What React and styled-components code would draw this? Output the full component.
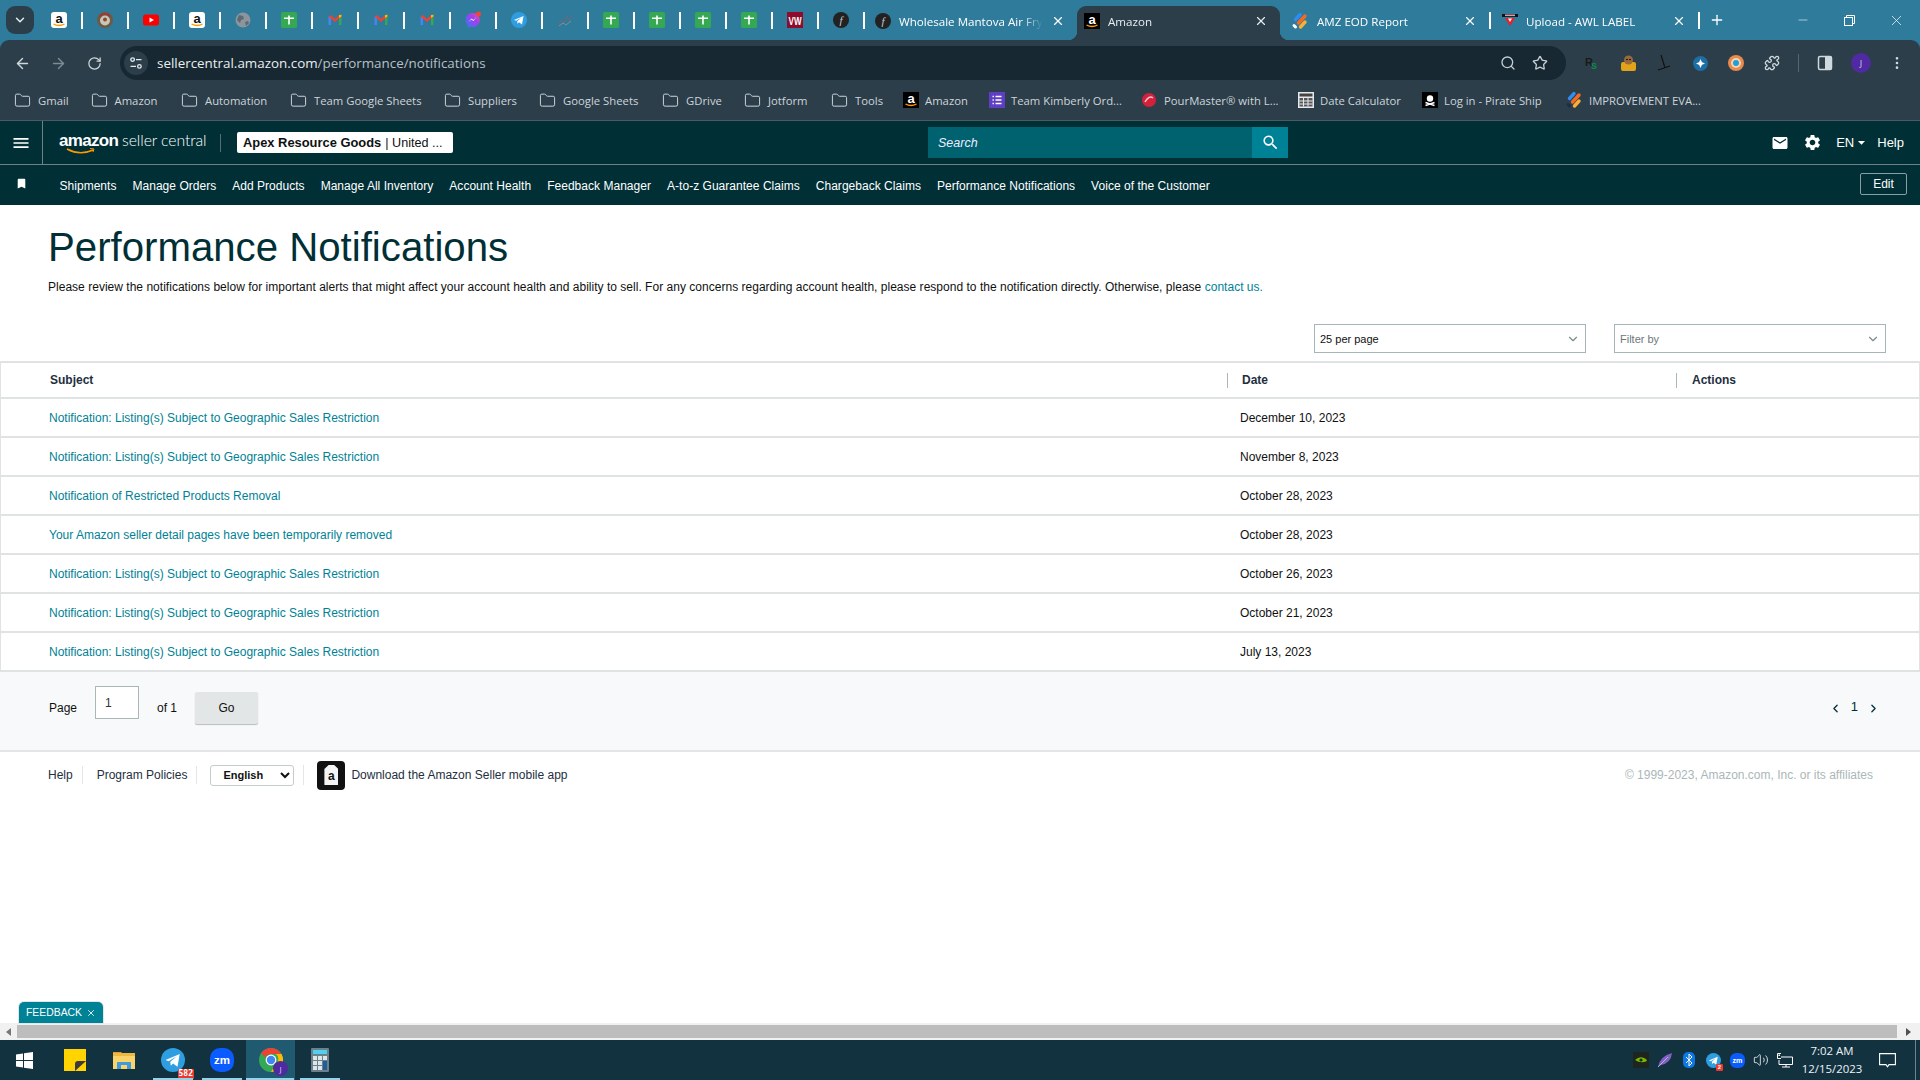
import React from "react";
import styled, { createGlobalStyle } from "styled-components";
import { ArrowLeft, ArrowRight, RotateCw, Search, Star, Puzzle, X, Plus, Minus, Folder, ChevronDown, ChevronLeft, ChevronRight, Volume2, MoreVertical } from "lucide-react";
import { MdMenu, MdEmail, MdSettings, MdBookmark, MdSearch, MdArrowDropDown } from "react-icons/md";

const Global = createGlobalStyle`
  html, body { margin: 0; padding: 0; height: 100%; overflow: hidden; background: #fff; }
  #root { height: 100vh; }
  * { box-sizing: border-box; }
`;
const UI = `"Open Sans", "Noto Sans", sans-serif`;
const AR = `"Liberation Sans", Arial, sans-serif`;

const Page = styled.div`display:flex;flex-direction:column;height:100vh;font-family:${AR};color:#0f1111;`;
const BrowserChrome = styled.div`background:#2e7b9b;flex:none;`;
const TabStrip = styled.div`display:flex;align-items:flex-end;height:40px;padding-left:6px;color:#fff;font-family:${UI};`;
const TabMenu = styled.div`width:28px;height:28px;border-radius:9px;background:#2c3e4a;display:flex;align-items:center;justify-content:center;margin:0 3px 6px 0;color:#e6edf0;`;
const Pinned = styled.div`width:44px;height:34px;display:flex;align-items:center;justify-content:center;padding-bottom:6px;`;
const Sep = styled.div`width:2px;height:17px;background:#fff;margin-bottom:11px;flex:none;`;
const Tab = styled.div`
  position:relative;flex:none;width:${p=>p.$w}px;height:34px;display:flex;align-items:center;gap:8px;
  padding:0 12px 4px ${p=>p.$pl}px;font-size:11.6px;color:${p=>p.$active?"#e8eef1":"#fff"};
  background:${p=>p.$active?"#2c3e4a":"transparent"};border-radius:${p=>p.$active?"9px 9px 0 0":"0"};
  ${p=>p.$active?`
    &::before,&::after{content:"";position:absolute;bottom:0;width:9px;height:9px;}
    &::before{left:-9px;background:radial-gradient(circle at 0 0,transparent 9px,#2c3e4a 9.5px);}
    &::after{right:-9px;background:radial-gradient(circle at 100% 0,transparent 9px,#2c3e4a 9.5px);}
  `:""}
`;
const TabTitle = styled.span`flex:1;min-width:0;white-space:nowrap;overflow:hidden;-webkit-mask-image:linear-gradient(90deg,#000 85%,transparent);mask-image:linear-gradient(90deg,#000 85%,transparent);`;
const NewTab = styled.div`width:34px;height:34px;display:flex;align-items:center;justify-content:center;padding-bottom:6px;`;
const WinControls = styled.div`margin-left:auto;display:flex;align-self:stretch;align-items:center;padding-right:0;`;
const WinBtn = styled.div`width:47px;height:40px;display:flex;align-items:center;justify-content:center;color:#fff;`;

const Toolbar = styled.div`height:40px;background:#2c3e4a;border-radius:9px 9px 0 0;display:flex;align-items:flex-end;padding-left:4px;color:#cfd8dc;`;
const NavBtn = styled.div`width:36px;height:34px;display:flex;align-items:center;justify-content:center;color:${p=>p.$dim?"#7d8b94":"#cfd8dc"};`;
const Omni = styled.div`margin-left:8px;width:1446px;height:34px;border-radius:17px;background:#172832;display:flex;align-items:center;padding-left:4px;padding-right:10px;`;
const SiteBtn = styled.div`width:24px;height:24px;border-radius:50%;background:#2c3e4a;display:flex;align-items:center;justify-content:center;flex:none;`;
const Url = styled.span`margin-left:9px;font:13.4px ${UI};color:#e9eef1;flex:1;white-space:nowrap;`;
const UrlDim = styled.span`color:#b6c0c6;`;
const OmniIcon = styled.div`width:32px;display:flex;justify-content:center;color:#c4ced3;`;
const Ext = styled.div`width:36px;height:34px;display:flex;align-items:center;justify-content:center;flex:none;`;
const ToolSep = styled.div`width:1px;height:18px;background:#55666f;margin:0 9px 8px 8px;align-self:flex-end;`;
const Avatar = styled.div`width:${p=>p.$s||20}px;height:${p=>p.$s||20}px;border-radius:50%;background:#4f2aa0;color:#d9cff5;font:${p=>p.$fs||9}px ${UI};display:flex;align-items:center;justify-content:center;`;

const Bookmarks = styled.div`height:41px;background:#2c3e4a;border-bottom:1px solid #4b5a63;display:flex;align-items:center;font:11.3px ${UI};color:#ccd5da;padding-left:${p=>p.$pl}px;`;
const Bookmark = styled.div`flex:none;width:${p=>p.$w}px;display:flex;align-items:center;gap:${p=>p.$gap||7}px;white-space:nowrap;`;

const SellerHeader = styled.div`height:44px;background:#002f36;border-bottom:1px solid #6e8286;display:flex;align-items:center;color:#fff;flex:none;`;
const BurgerCell = styled.div`width:43px;height:100%;border-right:1px solid #6e8286;display:flex;align-items:center;justify-content:center;padding-right:1px;`;
const Logo = styled.div`position:relative;margin-left:16px;width:144px;display:flex;align-items:baseline;gap:4px;height:22px;padding-bottom:4px;margin-top:-3px;white-space:nowrap;`;
const LogoMark = styled.span`font:bold 17px ${AR};letter-spacing:-0.7px;`;
const LogoName = styled.span`font:300 15.8px Lato,${UI};letter-spacing:-0.1px;`;
const LogoSmile = styled.svg`position:absolute;left:7px;top:18px;`;
const HeaderSep = styled.div`width:1px;height:18px;background:#566f74;margin-left:17px;`;
const Account = styled.div`margin-left:16px;width:216px;height:21px;background:#fff;border-radius:2px;color:#0f1111;display:flex;align-items:center;padding-left:6px;font:12.6px ${AR};white-space:nowrap;`;
const AccountName = styled.b`font:bold 12.9px ${AR};margin-right:4px;`;
const SearchBox = styled.div`margin-left:475px;width:324px;height:31px;background:#00616f;font:italic 12.5px ${AR};color:#eef;display:flex;align-items:center;padding-left:10px;`;
const SearchBtn = styled.div`width:36px;height:31px;background:#008296;display:flex;align-items:center;justify-content:center;`;
const HeaderRight = styled.div`margin-left:auto;display:flex;align-items:center;padding-right:16px;font:13px ${AR};`;
const HeaderIcon = styled.div`width:${p=>p.$w}px;display:flex;justify-content:center;`;
const Lang = styled.div`display:flex;align-items:center;margin-left:7px;margin-right:4px;`;

const SellerNav = styled.div`height:40px;background:#002f36;display:flex;align-items:center;color:#fff;flex:none;font:12px ${AR};padding-top:2px;`;
const NavPin = styled.div`width:59.5px;padding-left:15px;display:flex;margin-top:-6px;`;
const NavLinks = styled.div`display:flex;gap:16px;white-space:nowrap;letter-spacing:.03px;`;
const EditBtn = styled.div`margin-left:auto;margin-right:13px;margin-top:-5px;width:47px;height:22px;border:1px solid #8a9da1;border-radius:2px;display:flex;align-items:center;justify-content:center;font:12px ${AR};`;

const Main = styled.div`position:relative;flex:1;min-height:0;display:flex;flex-direction:column;background:#fff;`;
const Intro = styled.div`padding:20px 48px 0;`;
const Title = styled.h1`margin:0;font:400 40.2px/46px ${AR};color:#002f36;`;
const Desc = styled.p`margin:8px 0 0;font:12px/16px ${AR};color:#0f1111;white-space:nowrap;letter-spacing:.02px;`;
const Link = styled.a`color:#008296;text-decoration:none;`;
const Controls = styled.div`display:flex;justify-content:flex-end;gap:28px;padding:29px 34px 8px 0;`;
const Dropdown = styled.div`width:272px;height:29px;border:1px solid #a6b6b8;display:flex;align-items:center;justify-content:space-between;padding:0 5px 0 5px;font:11px ${AR};color:${p=>p.$muted?"#6c7778":"#0f1111"};`;
const Table = styled.div`border:solid #dfe3e3;border-width:2px 1px 0;flex:none;`;
const Row = styled.div`display:grid;grid-template-columns:1226px 449px 1fr;height:${p=>p.$h}px;border-bottom:2px solid #dfe3e3;align-items:center;font-size:12px;`;
const HeadCell = styled.div`font-weight:bold;color:#232f3e;padding-left:${p=>p.$pl}px;${p=>p.$div?"border-left:1px solid #aab7b8;":""}height:15px;line-height:15px;`;
const Cell = styled.div`padding-left:${p=>p.$pl}px;color:#0f1111;`;
const Pager = styled.div`height:80px;background:#f8f9fa;border-bottom:2px solid #e3e6e6;display:flex;align-items:center;padding:0 0 6px 49px;font-size:12px;flex:none;`;
const PageInput = styled.div`width:44px;height:33px;border:1px solid #aab7b8;background:#fff;margin:0 18px 11px 18px;padding:9px 0 0 9px;font-size:12px;color:#333;`;
const GoBtn = styled.div`width:63px;height:32px;margin-left:18px;background:#e3e6e6;border-radius:2px;box-shadow:0 1px 1px rgba(0,0,0,.25);display:flex;align-items:center;justify-content:center;color:#0f1111;`;
const PagerRight = styled.div`margin-left:auto;margin-right:40px;display:flex;align-items:center;gap:7px;color:#002f36;font-size:13px;`;
const Footer = styled.div`height:46px;display:flex;align-items:center;padding:0 47px 0 48px;font-size:12px;color:#232f3e;flex:none;`;
const FootLink = styled.span`padding-right:${p=>p.$pr}px;margin-right:${p=>p.$mr}px;border-right:1px solid #e3e6e6;line-height:18px;white-space:nowrap;`;
const LangSelect = styled.select`width:84px;height:21px;font:bold 11px ${AR};color:#0f1111;background:#fff;border:1px solid #c4cccc;border-radius:3px;padding-left:8px;`;
const FootDiv = styled.div`width:1px;height:20px;background:#e3e6e6;margin:0 13px 0 9px;`;
const AppTag = styled.div`width:28px;height:29px;border-radius:4px;background:#111;display:flex;align-items:center;justify-content:center;margin-right:6px;`;
const Copy = styled.span`margin-left:auto;color:#aab7b8;`;
const Feedback = styled.div`position:absolute;left:19px;bottom:0;width:84px;height:21px;background:#008296;border-radius:5px 5px 0 0;box-shadow:0 0 0 1px #e3e6e6;color:#fff;font:10.4px ${AR};display:flex;align-items:center;justify-content:center;gap:4px;`;

const HScroll = styled.div`height:17px;background:#f1f1f1;display:flex;align-items:center;flex:none;`;
const ScrollArrow = styled.div`width:17px;display:flex;justify-content:center;`;
const ScrollThumb = styled.div`flex:1;height:13px;background:#bdbdbd;`;
const Tri = styled.div`width:0;height:0;border-style:solid;border-color:transparent;border-width:4px 0;${p=>p.$left?"border-right:5px solid #777;":"border-left:5px solid #505050;"}`;

const Taskbar = styled.div`height:40px;background:#123240;display:flex;align-items:center;color:#fff;flex:none;`;
const StartBtn = styled.div`width:50px;display:flex;justify-content:center;padding-right:2px;`;
const TaskItem = styled.div`
  position:relative;width:49px;height:40px;display:flex;align-items:center;justify-content:center;
  background:${p=>p.$active?"#1f5a70":"transparent"};
  ${p=>p.$open?`&::after{content:"";position:absolute;bottom:0;left:${p.$active?0:5}px;right:${p.$active?1:4}px;height:2px;background:#8fd6ec;}`:""}
`;
const CountBadge = styled.span`position:absolute;right:3px;bottom:1px;background:#e8392f;color:#fff;font:bold 8px/10px "DejaVu Sans Mono",monospace;padding:0 1px;border-radius:1px;`;
const Tray = styled.div`margin-left:auto;display:flex;align-items:center;height:100%;`;
const TrayIcon = styled.div`width:24px;display:flex;justify-content:center;position:relative;`;
const Clock = styled.div`width:70px;text-align:center;font:11.4px/18px ${UI};color:#eef3f5;`;
const Notify = styled.div`width:40px;display:flex;justify-content:center;`;
const ShowDesktop = styled.div`width:13px;height:100%;margin-left:0;border-right:0;display:flex;justify-content:center;`;
const ShowLine = styled.div`width:1px;height:100%;background:#6d838d;margin-left:3px;`;

/* favicons */
const AFav = ({ dark, size = 16 }) => (
  <svg width={size} height={size} viewBox="0 0 16 16">
    <rect width="16" height="16" rx={dark ? 0 : 3} fill={dark ? "#000" : "#fff"} />
    <text x="8" y="10.5" textAnchor="middle" fontFamily="Liberation Sans" fontWeight="bold" fontSize="13" fill={dark ? "#fff" : "#111"}>a</text>
    <path d="M2.5 12q5.5 3 11 0" stroke="#f90" strokeWidth="1.4" fill="none" />
  </svg>
);
const Sheets = () => (
  <svg width="16" height="16" viewBox="0 0 16 16"><rect width="16" height="16" rx="1.5" fill="#34a853" /><path d="M3 6.2h10M8 3.5v9" stroke="#fff" strokeWidth="1.6" /></svg>
);
const Gmail = () => (
  <svg width="16" height="16" viewBox="0 0 16 16">
    <path d="M1.5 13V4.5l2.5 1v7.5z" fill="#4285f4" /><path d="M12 13V5.5l2.5-1V13z" fill="#34a853" />
    <path d="M1.5 4.5L4 3l4 4 4-4 2.5 1.5L8 10z" fill="#ea4335" /><path d="M12 3l2.5-.3v1.8L12 6z" fill="#fbbc04" />
  </svg>
);
const Youtube = () => (
  <svg width="16" height="16" viewBox="0 0 16 16"><rect y="2.5" width="16" height="11" rx="2.5" fill="#f00" /><path d="M6.5 5.5l4.5 2.5-4.5 2.5z" fill="#fff" /></svg>
);
const Seal = () => (
  <svg width="16" height="16" viewBox="0 0 16 16"><circle cx="8" cy="8" r="8" fill="#6d5a45" /><circle cx="8" cy="8.5" r="5" fill="#c9c6b8" /><circle cx="8" cy="7.5" r="2" fill="#8a4a3a" /><path d="M3 4q5-4 10 0" stroke="#a33" strokeWidth="1.5" fill="none" /></svg>
);
const Globe = () => (
  <svg width="16" height="16" viewBox="0 0 16 16"><circle cx="8" cy="8" r="7.5" fill="#8b959b" /><path d="M4 3l4 1 1 3-3 1-1 3-3-3zM10 10l3-1 1 2-3 3z" fill="#5c6a72" /></svg>
);
const Messenger = () => (
  <svg width="18" height="18" viewBox="0 0 18 18"><defs><linearGradient id="ms" x1="0" y1="1" x2="1" y2="0"><stop offset="0" stopColor="#2d7df6" /><stop offset=".6" stopColor="#a23ef0" /><stop offset="1" stopColor="#f5537f" /></linearGradient></defs><path d="M8.5 2a7 7 0 0 0-4.5 12.2V17l2.5-1.4A7 7 0 1 0 8.5 2z" fill="url(#ms)" /><path d="M4.5 11l3-3.5 2 1.6L12.5 6l-3 4-2-1.6z" fill="#fff" /><circle cx="14.5" cy="3" r="2.5" fill="#f0453a" /></svg>
);
const Telegram = ({ size = 16 }) => (
  <svg width={size} height={size} viewBox="0 0 16 16"><circle cx="8" cy="8" r="8" fill="#2f9ee0" /><path d="M3 8l9.5-4-1.5 8.5-3-2.2-1.5 1.5-.3-2.6 4.3-3.7-5.4 3.3z" fill="#fff" /></svg>
);
const Chart = () => (
  <svg width="16" height="16" viewBox="0 0 16 16"><path d="M1 13l3-5 3 3 3-7 2 5 3-6" stroke="#5a6f83" strokeWidth="1.3" fill="none" /><path d="M2 14l4-3 3 2 5-4" stroke="#7b8ea0" strokeWidth="1" fill="none" /></svg>
);
const VW = () => (
  <svg width="16" height="16" viewBox="0 0 16 16"><rect width="16" height="16" fill="#8d0c2c" /><text x="8" y="12.5" textAnchor="middle" fontFamily="Liberation Sans" fontWeight="bold" fontSize="10" textLength="13" lengthAdjust="spacingAndGlyphs" fill="#fff">VW</text></svg>
);
const FCircle = () => (
  <svg width="16" height="16" viewBox="0 0 16 16"><circle cx="8" cy="8" r="8" fill="#222" /><text x="8" y="11.5" textAnchor="middle" fontFamily="Liberation Serif" fontStyle="italic" fontSize="11" fill="#ccc">f</text></svg>
);
const Jot = ({ dark }) => (
  <svg width="18" height="18" viewBox="0 0 18 18">
    <g strokeLinecap="round" fill="none"><path d="M9 2.5L4.5 7.5" stroke="#2f8cf0" strokeWidth="3.4" /><path d="M14 4L7.5 11" stroke="#f26a24" strokeWidth="3.4" /><path d="M14 10l-4.5 5" stroke="#fbb034" strokeWidth="3.4" /><path d="M3 13.5l1.5 1.5" stroke={dark ? "#1b2c55" : "#fff"} strokeWidth="3" /></g>
  </svg>
);
const AwlFav = () => (
  <svg width="16" height="16" viewBox="0 0 16 16"><rect y="1" width="16" height="3" fill="#111" /><rect x="3" y="1.5" width="10" height="1.6" fill="#d9a" /><path d="M3 5h10l-5 8z" fill="#e8202a" /><path d="M6 5.5h4L8 9z" fill="#fff" /></svg>
);
const FolderIcon = () => <Folder size={17} strokeWidth={1.4} color="#ccd5da" style={{ flex: "none" }} />;
const Forms = () => (
  <svg width="16" height="16" viewBox="0 0 16 16"><rect width="16" height="16" fill="#5f3dc4" /><path d="M6.5 4.5h6M6.5 8h6M6.5 11.5h6M3.5 4.5h1.4M3.5 8h1.4M3.5 11.5h1.4" stroke="#fff" strokeWidth="1.6" /></svg>
);
const Pour = () => (
  <svg width="16" height="16" viewBox="0 0 16 16"><circle cx="8" cy="8" r="7" fill="#d3213c" /><path d="M4 10q4-7 8-4" stroke="#f6c0c8" strokeWidth="1.5" fill="none" /></svg>
);
const Calc = () => (
  <svg width="16" height="16" viewBox="0 0 16 16"><rect width="16" height="16" fill="#e6e9ec" /><rect x="1.5" y="1.5" width="13" height="3" fill="#444" /><path d="M1.5 6h13v8.5h-13z" fill="#555" /><path d="M5.5 6v8.5M10 6v8.5M1.5 9h13M1.5 12h13" stroke="#e6e9ec" /></svg>
);
const Pirate = () => (
  <svg width="16" height="16" viewBox="0 0 16 16"><rect width="16" height="16" fill="#000" /><circle cx="8" cy="6.5" r="3.2" fill="#fff" /><path d="M3.5 10.5l9 3M12.5 10.5l-9 3" stroke="#fff" strokeWidth="1.6" /></svg>
);
const TuneIcon = () => (
  <svg width="14" height="14" viewBox="0 0 14 14" fill="none" stroke="#e3e8eb" strokeWidth="1.3"><circle cx="3.6" cy="3.6" r="1.8" /><path d="M7 3.6h5.5M1.5 10.4H7" /><circle cx="10.4" cy="10.4" r="1.8" /></svg>
);
const SidePanel = () => (
  <svg width="16" height="16" viewBox="0 0 16 16"><rect x="1.5" y="1.5" width="13" height="13" rx="1.5" fill="none" stroke="#cfd8dc" strokeWidth="1.5" /><rect x="8" y="1.5" width="6.5" height="13" fill="#cfd8dc" /></svg>
);
const Restore = () => (
  <svg width="11" height="11" viewBox="0 0 11 11" fill="none" stroke="#fff"><rect x=".5" y="2.5" width="8" height="8" /><path d="M2.5 2.5v-2h8v8h-2" /></svg>
);
const Win = () => (
  <svg width="17" height="17" viewBox="0 0 17 17" fill="#fff"><path d="M0 2.4l7-1v6.6H0zM8 1.2L17 0v8H8zM0 9h7v6.6l-7-1zM8 9h9v8l-9-1.2z" /></svg>
);
const Notes = () => (
  <svg width="22" height="22" viewBox="0 0 22 22"><rect width="22" height="22" fill="#ffd400" /><path d="M11 22V15q0-3 3-3h8z" fill="#3b3b3b" /><path d="M11 22l11-10v0" fill="none" /></svg>
);
const Explorer = () => (
  <svg width="22" height="20" viewBox="0 0 22 20"><path d="M0 2h8l2 2h-10z" fill="#e0a02f" /><rect y="3" width="22" height="16" fill="#fbd36b" /><rect y="3" width="22" height="3" fill="#f0b840" /><path d="M4 19v-7h14v7h-4v-4H8v4z" fill="#3f9bdc" /></svg>
);
const Zoom = ({ size = 24 }) => (
  <svg width={size} height={size} viewBox="0 0 24 24"><rect width="24" height="24" rx="10" fill="#0b5cff" /><text x="12" y="16" textAnchor="middle" fontFamily="Liberation Sans" fontWeight="bold" fontSize="11.5" fill="#fff">zm</text></svg>
);
const ChromeLogo = () => (
  <svg width="24" height="24" viewBox="0 0 24 24">
    <circle cx="12" cy="12" r="12" fill="#34a853" /><path d="M12 0a12 12 0 0 1 10.4 6H12a6 6 0 0 0-5.6 3.6L2.2 5A12 12 0 0 1 12 0z" fill="#ea4335" />
    <path d="M22.4 6A12 12 0 0 1 12 24l5-8.5A6 6 0 0 0 17 6z" fill="#fbbc04" /><circle cx="12" cy="12" r="5.4" fill="#fff" /><circle cx="12" cy="12" r="4.2" fill="#4285f4" />
  </svg>
);
const CalcApp = () => (
  <svg width="18" height="24" viewBox="0 0 18 24"><rect width="18" height="24" rx="1" fill="#6e7f8c" /><rect x="2" y="2" width="14" height="4" fill="#4fd0ee" /><path d="M2 8h4v4H2zM7 8h4v4H7zM12 8h4v4h-4zM2 13h4v4H2zM7 13h4v4H7zM2 18h4v4H2zM7 18h4v4H7z" fill="#dfe6ea" /><rect x="12" y="13" width="4" height="9" fill="#1e5f96" /></svg>
);
const Nvidia = () => (
  <svg width="16" height="16" viewBox="0 0 16 16"><rect width="16" height="16" fill="#1e241e" /><path d="M2 8q5-5 11-1l1 2q-6 3-12-1z" fill="#76b900" /><circle cx="8" cy="8" r="1.6" fill="#1e241e" /></svg>
);
const Feather = () => (
  <svg width="16" height="16" viewBox="0 0 16 16"><path d="M1 15Q3 4 15 1 14 11 4 13z" fill="#8063c0" /><path d="M1 15L11 5" stroke="#cdbcf0" strokeWidth=".8" /></svg>
);
const Bluetooth = () => (
  <svg width="12" height="16" viewBox="0 0 12 16"><rect width="12" height="16" rx="5" fill="#0b78e3" /><path d="M3 5l6 6-3 3V2l3 3-6 6" stroke="#fff" fill="none" /></svg>
);
const NetIcon = () => (
  <svg width="16" height="15" viewBox="0 0 16 15" fill="none" stroke="#fff"><path d="M4 .5H.5v5H4M4 4h11.5v7.5H2V7" /><path d="M9 11.5v2.5M5 14h8" /><rect x="1.5" y="1.5" width="1.5" height="1.5" fill="#fff" stroke="none" /></svg>
);
const NotifyIcon = () => (
  <svg width="17" height="15" viewBox="0 0 17 15" fill="none" stroke="#fff" strokeWidth="1.1"><path d="M.6.6h15.8v11H10l-1.5 2.2L7 11.6H.6z" /></svg>
);

const pinned = [<AFav />, <Seal />, <Youtube />, <AFav />, <Globe />, <Sheets />, <Gmail />, <Gmail />, <Gmail />, <Messenger />, <Telegram />, <Chart />, <Sheets />, <Sheets />, <Sheets />, <Sheets />, <VW />, <FCircle />];
const bookmarks = [
  { w: 76.5, t: "Gmail" }, { w: 90.5, t: "Amazon" }, { w: 109, t: "Automation" }, { w: 154, t: "Team Google Sheets" }, { w: 95, t: "Suppliers" },
  { w: 123, t: "Google Sheets" }, { w: 82, t: "GDrive" }, { w: 87, t: "Jotform" }, { w: 72, t: "Tools" },
  { w: 86, t: "Amazon", i: <AFav dark />, gap: 6 }, { w: 152, t: "Team Kimberly Ord...", i: <Forms />, gap: 6 }, { w: 157, t: "PourMaster® with L...", i: <Pour />, gap: 7 },
  { w: 124, t: "Date Calculator", i: <Calc />, gap: 6 }, { w: 143, t: "Log in - Pirate Ship", i: <Pirate />, gap: 6 }, { w: 140, t: "IMPROVEMENT EVA...", i: <Jot dark />, gap: 6 },
];
const navLinks = ["Shipments", "Manage Orders", "Add Products", "Manage All Inventory", "Account Health", "Feedback Manager", "A-to-z Guarantee Claims", "Chargeback Claims", "Performance Notifications", "Voice of the Customer"];
const GEO = "Notification: Listing(s) Subject to Geographic Sales Restriction";
const rows = [
  [GEO, "December 10, 2023"], [GEO, "November 8, 2023"], ["Notification of Restricted Products Removal", "October 28, 2023"],
  ["Your Amazon seller detail pages have been temporarily removed", "October 28, 2023"], [GEO, "October 26, 2023"], [GEO, "October 21, 2023"], [GEO, "July 13, 2023"],
];

export default function App() {
  return (
    <Page>
      <Global />
      <BrowserChrome>
        <TabStrip>
          <TabMenu><ChevronDown size={14} strokeWidth={2.5} /></TabMenu>
          {pinned.map((icon, i) => (
            <React.Fragment key={i}><Pinned>{icon}</Pinned><Sep /></React.Fragment>
          ))}
          <Tab $w={212} $pl={10}><FCircle /><TabTitle>Wholesale Mantova Air Fryer</TabTitle><X size={14} /></Tab>
          <Tab $w={203} $pl={7} $active><AFav dark /><TabTitle>Amazon</TabTitle><X size={14} /></Tab>
          <Tab $w={209} $pl={11}><Jot /><TabTitle>AMZ EOD Report</TabTitle><X size={14} /></Tab>
          <Sep />
          <Tab $w={207} $pl={11}><AwlFav /><TabTitle>Upload - AWL LABEL</TabTitle><X size={14} /></Tab>
          <Sep />
          <NewTab><Plus size={16} /></NewTab>
          <WinControls>
            <WinBtn><Minus size={14} strokeWidth={1} /></WinBtn>
            <WinBtn><Restore /></WinBtn>
            <WinBtn><X size={17} strokeWidth={1} /></WinBtn>
          </WinControls>
        </TabStrip>
        <Toolbar>
          <NavBtn><ArrowLeft size={17} /></NavBtn>
          <NavBtn $dim><ArrowRight size={17} /></NavBtn>
          <NavBtn><RotateCw size={15} /></NavBtn>
          <Omni>
            <SiteBtn><TuneIcon /></SiteBtn>
            <Url>sellercentral.amazon.com<UrlDim>/performance/notifications</UrlDim></Url>
            <OmniIcon><Search size={16} /></OmniIcon>
            <OmniIcon><Star size={16} /></OmniIcon>
          </Omni>
          <Ext style={{ marginLeft: 8 }}><svg width="16" height="16" viewBox="0 0 16 16"><text x="1" y="11" fontFamily="Liberation Sans" fontWeight="bold" fontSize="11" fill="#1a1a1a">R</text><text x="7" y="14" fontFamily="Liberation Sans" fontWeight="bold" fontSize="11" fill="#0a8a4a">s</text></svg></Ext>
          <Ext><svg width="17" height="18" viewBox="0 0 17 18"><rect x="1" y="8" width="15" height="9" rx="2" fill="#e2a21a" /><circle cx="8.5" cy="6" r="4.5" fill="#9a6a3a" /><circle cx="7" cy="5.5" r=".8" /><circle cx="10" cy="5.5" r=".8" /></svg></Ext>
          <Ext><svg width="14" height="18" viewBox="0 0 14 18"><path d="M4 1l4 13M1 16l12-4" stroke="#111" strokeWidth="1.2" fill="none" /></svg></Ext>
          <Ext><svg width="15" height="15" viewBox="0 0 15 15"><circle cx="7.5" cy="7.5" r="7.5" fill="#1c6ea4" /><path d="M7.5 3l2 4.500-2 4.500-2-4.500zM3 7.500l4.500-2 4.500 2-4.500 2z" fill="#fff" /></svg></Ext>
          <Ext><svg width="16" height="16" viewBox="0 0 16 16"><circle cx="8" cy="8" r="8" fill="#e88a4a" /><circle cx="8" cy="8" r="5" fill="#f3d3b5" /><circle cx="8" cy="8" r="3" fill="#1f9fd8" /></svg></Ext>
          <Ext><Puzzle size={16} /></Ext>
          <ToolSep />
          <Ext style={{ width: 36, marginLeft: -1 }}><SidePanel /></Ext>
          <Ext><Avatar>J</Avatar></Ext>
          <Ext><MoreVertical size={16} /></Ext>
        </Toolbar>
        <Bookmarks $pl={14}>
          {bookmarks.map((b, i) => (
            <Bookmark key={i} $w={b.w} $gap={b.gap}>{b.i || <FolderIcon />}<span>{b.t}</span></Bookmark>
          ))}
        </Bookmarks>
      </BrowserChrome>

      <SellerHeader>
        <BurgerCell><MdMenu size={20} /></BurgerCell>
        <Logo>
          <LogoMark>amazon</LogoMark><LogoName>seller central</LogoName>
          <LogoSmile width="30" height="7" viewBox="0 0 30 7"><path d="M1 1q13 7 26 1" stroke="#f90" strokeWidth="1.5" fill="none" /><path d="M24 .5l4 .5-1 3" stroke="#f90" strokeWidth="1" fill="none" /></LogoSmile>
        </Logo>
        <HeaderSep />
        <Account><AccountName>Apex Resource Goods</AccountName>| United ...</Account>
        <SearchBox>Search</SearchBox>
        <SearchBtn><MdSearch size={19} /></SearchBtn>
        <HeaderRight>
          <HeaderIcon $w={33}><MdEmail size={18} /></HeaderIcon>
          <HeaderIcon $w={33}><MdSettings size={19} /></HeaderIcon>
          <Lang>EN<MdArrowDropDown size={17} style={{ margin: "0 -1px" }} /></Lang>
          <span style={{ marginLeft: 4 }}>Help</span>
        </HeaderRight>
      </SellerHeader>
      <SellerNav>
        <NavPin><MdBookmark size={13} /></NavPin>
        <NavLinks>{navLinks.map(n => <span key={n}>{n}</span>)}</NavLinks>
        <EditBtn>Edit</EditBtn>
      </SellerNav>

      <Main>
        <Intro>
          <Title>Performance Notifications</Title>
          <Desc>Please review the notifications below for important alerts that might affect your account health and ability to sell. For any concerns regarding account health, please respond to the notification directly. Otherwise, please <Link>contact us.</Link></Desc>
        </Intro>
        <Controls>
          <Dropdown>25 per page<ChevronDown size={14} color="#7d8b8d" /></Dropdown>
          <Dropdown $muted>Filter by<ChevronDown size={14} color="#7d8b8d" /></Dropdown>
        </Controls>
        <Table>
          <Row $h={36}>
            <HeadCell $pl={49}>Subject</HeadCell>
            <HeadCell $pl={14} $div>Date</HeadCell>
            <HeadCell $pl={15} $div>Actions</HeadCell>
          </Row>
          {rows.map((r, i) => (
            <Row key={i} $h={39}>
              <Cell $pl={48}><Link>{r[0]}</Link></Cell>
              <Cell $pl={13}>{r[1]}</Cell>
              <Cell $pl={15} />
            </Row>
          ))}
        </Table>
        <Pager>
          Page
          <PageInput>1</PageInput>
          of 1
          <GoBtn>Go</GoBtn>
          <PagerRight><ChevronLeft size={13} strokeWidth={2.4} /><span style={{ margin: "-4px 2px 0" }}>1</span><ChevronRight size={13} strokeWidth={2.4} /></PagerRight>
        </Pager>
        <Footer>
          <FootLink $pr={9} $mr={14}>Help</FootLink>
          <FootLink $pr={9} $mr={13}>Program Policies</FootLink>
          <LangSelect defaultValue="English"><option>English</option></LangSelect>
          <FootDiv />
          <AppTag><AFavTag /></AppTag>
          <span>Download the Amazon Seller mobile app</span>
          <Copy>© 1999-2023, Amazon.com, Inc. or its affiliates</Copy>
        </Footer>
        <Feedback>FEEDBACK <X size={10} /></Feedback>
      </Main>

      <HScroll>
        <ScrollArrow><Tri $left /></ScrollArrow>
        <ScrollThumb />
        <ScrollArrow style={{ width: 23 }}><Tri /></ScrollArrow>
      </HScroll>
      <Taskbar>
        <StartBtn><Win /></StartBtn>
        <TaskItem><Notes /></TaskItem>
        <TaskItem><Explorer /></TaskItem>
        <TaskItem $open><Telegram size={24} /><CountBadge>582</CountBadge></TaskItem>
        <TaskItem $open><Zoom /></TaskItem>
        <TaskItem $open $active><ChromeLogo /><ChromeAvatar><Avatar $s={15} $fs={8}>J</Avatar></ChromeAvatar></TaskItem>
        <TaskItem $open><CalcApp /></TaskItem>
        <Tray>
          <TrayIcon><Nvidia /></TrayIcon>
          <TrayIcon><Feather /></TrayIcon>
          <TrayIcon><Bluetooth /></TrayIcon>
          <TrayIcon><Telegram size={15} /><TrayBadge>2</TrayBadge></TrayIcon>
          <TrayIcon><Zoom size={15} /></TrayIcon>
          <TrayIcon><Volume2 size={16} strokeWidth={1.2} /></TrayIcon>
          <TrayIcon><NetIcon /></TrayIcon>
          <Clock>7:02 AM<br />12/15/2023</Clock>
          <Notify><NotifyIcon /></Notify>
          <ShowDesktop><ShowLine /></ShowDesktop>
        </Tray>
      </Taskbar>
    </Page>
  );
}

const ChromeAvatar = styled.span`position:absolute;right:7px;bottom:4px;`;
const TrayBadge = styled.span`position:absolute;right:2px;bottom:-3px;background:#e8392f;color:#fff;font:bold 6px/7px ${AR};padding:0 2px;border-radius:1px;`;
const TagFace = styled.div`width:14px;height:20px;background:#f4f4f4;clip-path:polygon(30% 0,70% 0,100% 20%,100% 100%,0 100%,0 20%);display:flex;align-items:center;justify-content:center;font:bold 12px ${AR};color:#111;padding-top:2px;`;
const AFavTag = () => <TagFace>a</TagFace>;
